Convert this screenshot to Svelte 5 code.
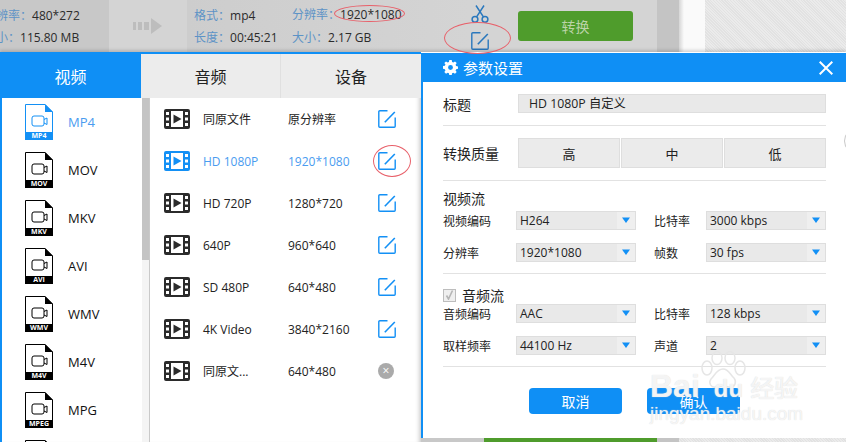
<script>
  const formats = [
    { name: 'MP4', badge: 'MP4', active: true },
    { name: 'MOV', badge: 'MOV' },
    { name: 'MKV', badge: 'MKV' },
    { name: 'AVI', badge: 'AVI' },
    { name: 'WMV', badge: 'WMV' },
    { name: 'M4V', badge: 'M4V' },
    { name: 'MPG', badge: 'MPEG' },
    { name: '', badge: '' },
  ];

  const presets = [
    { name: '同原文件', res: '原分辨率' },
    { name: 'HD 1080P', res: '1920*1080', active: true },
    { name: 'HD 720P', res: '1280*720' },
    { name: '640P', res: '960*640' },
    { name: 'SD 480P', res: '640*480' },
    { name: '4K Video', res: '3840*2160' },
    { name: '同原文...', res: '640*480', removable: true },
  ];
</script>

{#snippet editIcon(cls)}
  <svg class={cls} width="18" height="18" viewBox="0 0 18 18" fill="none" stroke="currentColor" stroke-width="1.4">
    <path d="M9.500 .8H1.800a1 1 0 0 0-1 1v14.400a1 1 0 0 0 1 1h14.400a1 1 0 0 0 1-1V7.500"/>
    <path d="M6.800 12.300 16.800 2" stroke-width="1.600"/>
  </svg>
{/snippet}

{#snippet caret()}
  <svg width="10" height="7" viewBox="0 0 10 7"><path d="M1 .5h8L5 6z" fill="#1390f5"/></svg>
{/snippet}

{#snippet select(value)}
  <div class="select">
    <span class="select-value">{value}</span>
    <span class="select-btn">{@render caret()}</span>
  </div>
{/snippet}

<div class="page">
  <!-- Task row, dimmed behind the panels -->
  <header class="task">
    <div class="src">
      <div class="src-col">
        <p><span class="lbl">分辨率：</span>480*272</p>
        <p><span class="lbl">大小：</span>115.80 MB</p>
      </div>
    </div>
    <div class="arrow">
      <svg width="30" height="16" viewBox="0 0 30 16" fill="#bdbdbd">
        <rect x="0" y="4" width="3" height="8"/>
        <rect x="5" y="4" width="4" height="8"/>
        <rect x="11" y="4" width="5" height="8"/>
        <path d="M18 4V0l11 8-11 8v-4z"/>
      </svg>
    </div>
    <div class="dst">
      <div class="dst-col">
        <p><span class="lbl">格式：</span>mp4</p>
        <p><span class="lbl">长度：</span>00:45:21</p>
      </div>
      <div class="dst-col second">
        <p><span class="lbl">分辨率：</span>1920*1080</p>
        <p><span class="lbl">大小：</span>2.17 GB</p>
      </div>
      <div class="tools">
        <svg width="18" height="18" viewBox="0 0 18 18" fill="none" stroke="#2a78bd" stroke-width="1.500">
          <circle cx="4" cy="14.300" r="2.900"/>
          <circle cx="14" cy="14.300" r="2.900"/>
          <path d="M5.600 11.800 13 .5M12.400 11.800 5 .5"/>
        </svg>
        {@render editIcon('tool-edit')}
      </div>
      <button class="convert">转换</button>
    </div>
    <div class="scroll-dim"></div>
    <div class="gap"></div>
    <div class="texture"></div>
  </header>

  <div class="body">
    <!-- Format picker -->
    <section class="picker">
      <div class="tabs">
        <div class="tab on">视频</div>
        <div class="tab">音频</div>
        <div class="tab">设备</div>
      </div>
      <div class="picker-main">
        <ul class="formats">
          {#each formats as f}
            <li class="format" class:active={f.active}>
              <svg class="doc" width="28" height="36" viewBox="0 0 28 36" fill="none">
                <path class="doc-line" d="M.5 29V.5H20L27.500 8V29"/>
                <path class="doc-fill" d="M20 0l8 8h-8z"/>
                <path class="doc-fill" d="M0 28h28v8H0z"/>
                <rect class="doc-line" x="7" y="12" width="12" height="10" rx="2"/>
                <path class="doc-line" d="M19 15.500l3-1.500v6.500l-3-1.500"/>
              </svg>
              <span class="badge">{f.badge}</span>
              <span class="format-name">{f.name}</span>
            </li>
          {/each}
        </ul>
        <div class="scroll"><div class="thumb"></div></div>
        <ul class="presets">
          {#each presets as p}
            <li class="preset" class:active={p.active}>
              <svg class="film" width="26" height="20" viewBox="0 0 26 20">
                <path fill-rule="evenodd" fill="currentColor" d="M2 0h22a2 2 0 0 1 2 2v16a2 2 0 0 1-2 2H2a2 2 0 0 1-2-2V2a2 2 0 0 1 2-2zM2 3v3h3V3zM2 8.500v3h3v-3zM2 14v3h3v-3zM21 3v3h3V3zM21 8.500v3h3v-3zM21 14v3h3v-3zM7 2v16h12V2z"/>
                <path fill="currentColor" d="M9.500 5.500v9l8-4.500z"/>
              </svg>
              <span class="preset-name">{p.name}</span>
              <span class="preset-res">{p.res}</span>
              {#if p.removable}
                <span class="remove">×</span>
              {:else}
                {@render editIcon('preset-edit')}
              {/if}
            </li>
          {/each}
        </ul>
      </div>
    </section>

    <!-- Settings dialog -->
    <div class="dialog-col">
      <section class="dialog">
        <div class="dlg-head">
          <svg width="15" height="15" viewBox="0 0 16 16" fill="#fff">
            <path fill-rule="evenodd" d="M6.700 0h2.600l.4 2.100 1.300.6L12.800 1.500l1.800 1.800-1.200 1.800.6 1.300 2 .4v2.600l-2 .4-.6 1.300 1.200 1.800-1.800 1.800-1.800-1.200-1.300.6-.4 2H6.700l-.4-2-1.300-.6-1.800 1.200-1.800-1.800 1.200-1.800-.6-1.300-2-.4V6.400l2-.4.6-1.300L1.400 3.300l1.800-1.800L5 2.700l1.300-.6zM8 5.400a2.600 2.600 0 1 0 0 5.200 2.600 2.600 0 0 0 0-5.200z"/>
          </svg>
          <span class="dlg-title">参数设置</span>
          <svg class="close" width="14" height="14" viewBox="0 0 14 14" stroke="#fff" stroke-width="2"><path d="M.7.700l12.600 12.600M13.300.700.700 13.300"/></svg>
        </div>
        <div class="dlg-body">
          <div class="row title-row">
            <span class="row-lbl">标题</span>
            <div class="title-input">HD 1080P 自定义</div>
          </div>
          <div class="row quality-row">
            <span class="row-lbl">转换质量</span>
            <div class="quality">
              <div>高</div>
              <div>中</div>
              <div>低</div>
            </div>
          </div>
          <div class="stream">
            <div class="stream-head">视频流</div>
            <div class="grid">
              <span>视频编码</span>{@render select('H264')}
              <span class="right">比特率</span>{@render select('3000 kbps')}
              <span>分辨率</span>{@render select('1920*1080')}
              <span class="right">帧数</span>{@render select('30 fps')}
            </div>
          </div>
          <div class="stream audio">
            <div class="stream-head">
              <span class="check">
                <svg width="9" height="10" viewBox="0 0 9 10" fill="none" stroke="#b5b5b5" stroke-width="1.600"><path d="M1.500 5.500 3.500 9 7.500 .5"/></svg>
              </span>
              音频流
            </div>
            <div class="grid">
              <span>音频编码</span>{@render select('AAC')}
              <span class="right">比特率</span>{@render select('128 kbps')}
              <span>取样频率</span>{@render select('44100 Hz')}
              <span class="right">声道</span>{@render select('2')}
            </div>
          </div>
          <div class="actions">
            <button>取消</button>
            <button>确认</button>
          </div>
        </div>
        <i class="edge-arc"></i>
      </section>
      <div class="under">
        <div class="under-a"></div>
        <div class="under-b"></div>
        <div class="under-c"></div>
        <div class="under-d"></div>
      </div>
    </div>
  </div>

  <!-- Hand-drawn red annotations -->
  <i class="ring ring-res"></i>
  <i class="ring ring-tool"></i>
  <i class="ring ring-list"></i>

  <!-- Watermark -->
  <div class="mark">
    <svg class="paw" width="46" height="42" viewBox="0 0 46 42" fill="none" stroke="#e6e6e6" stroke-width="1.500">
      <ellipse cx="7" cy="17" rx="5" ry="7"/>
      <ellipse cx="17" cy="7" rx="5" ry="6.500"/>
      <ellipse cx="30" cy="7" rx="5" ry="6.500"/>
      <ellipse cx="40" cy="17" rx="5" ry="7"/>
      <path d="M23 18c-6 0-8 6-12 10-3 4 0 9 5 8 4-1 9-1 13 0 6 1 8-5 5-9-4-3-5-9-11-9z"/>
    </svg>
    <div class="mark-top"><span>Bai</span><span class="du">du</span><span class="jy">经验</span></div>
    <div class="mark-url">jingyan.baidu.com</div>
  </div>
</div>

<style>
  :global(body) {
    margin: 0;
  }
  .page {
    position: relative;
    width: 846px;
    height: 442px;
    overflow: hidden;
    display: flex;
    flex-direction: column;
    font-family: "Open Sans", "Noto Sans CJK SC", sans-serif;
    font-size: 12px;
    color: #222;
    background: #fff;
  }
  p, ul {
    margin: 0;
    padding: 0;
    list-style: none;
  }

  /* Task row */
  .task {
    height: 52px;
    flex: none;
    display: flex;
    color: #2b2b2b;
    font-size: 12px;
  }
  .task p {
    line-height: 22px;
    white-space: nowrap;
  }
  .lbl {
    color: #5d93c6;
  }
  .src {
    width: 109px;
    background: #c8c8c8;
    overflow: hidden;
  }
  .src-col {
    margin: 5px 0 0 -16px;
  }
  .arrow {
    width: 78px;
    background: #d4d4d4;
    display: flex;
    align-items: center;
    justify-content: center;
  }
  .dst {
    width: 470px;
    background: linear-gradient(90deg, #cdcdcd, #d4d4d4 60%);
    display: flex;
    padding-left: 7px;
    box-sizing: border-box;
  }
  .dst-col {
    width: 98px;
    margin-top: 5px;
    flex: none;
  }
  .dst-col.second {
    width: 160px;
  }
  .dst-col.second p:first-child {
    margin-top: -1px;
    margin-bottom: 1px;
  }
  .tools {
    width: 56px;
    flex: none;
    display: flex;
    flex-direction: column;
    align-items: center;
    padding-top: 5px;
    gap: 9px;
    color: #2a78bd;
  }
  .convert {
    width: 115px;
    height: 30px;
    flex: none;
    margin: 11px 0 0 10px;
    border: 0;
    border-radius: 3px;
    background: #4f9c2c;
    color: #bcd4a8;
    font: inherit;
    font-size: 14px;
    padding: 0;
  }
  .scroll-dim {
    width: 22px;
    background: #c4c4c4;
  }
  .gap {
    width: 26px;
    background: linear-gradient(90deg, #d6d6d6, #fafafa 5px);
  }
  .texture, .under-d {
    flex: 1;
    background: repeating-linear-gradient(45deg, #e2e2e2 0 1px, #ebebeb 1px 2px);
  }

  .body {
    position: relative;
    flex: 1;
    min-height: 0;
    display: flex;
    box-shadow: 0 -2px 3px rgba(0, 0, 0, .15);
  }

  /* Format picker */
  .picker {
    width: 421px;
    flex: none;
    box-sizing: border-box;
    border-left: 2px solid #0f8ff5;
    border-top: 2px solid #0f8ff5;
    display: flex;
    flex-direction: column;
    background: #fff;
    box-shadow: inset -5px 0 5px -4px #bbb;
  }
  .tabs {
    height: 44px;
    flex: none;
    display: grid;
    grid-template-columns: 141px 140px 1fr;
    margin-left: -2px;
  }
  .tab {
    display: flex;
    align-items: center;
    justify-content: center;
    font-size: 16px;
    color: #222;
    background: #ececec;
    border-right: 1px solid #e0e0e0;
  }
  .tab:last-child {
    border-right: 0;
  }
  .tab.on {
    background: #0f8ff5;
    color: #fff;
    border: 0;
  }
  .picker-main {
    flex: 1;
    min-height: 0;
    display: flex;
  }
  .formats {
    width: 140px;
    flex: none;
    overflow: hidden;
  }
  .format {
    position: relative;
    height: 48px;
    display: flex;
    align-items: center;
    padding-left: 23px;
    font-size: 13px;
    color: #111;
  }
  .doc {
    color: #000;
    flex: none;
  }
  .doc-line {
    stroke: currentColor;
  }
  .doc-fill {
    fill: currentColor;
  }
  .badge {
    position: absolute;
    left: 23px;
    width: 28px;
    top: 34px;
    text-align: center;
    color: #fff;
    font-size: 7px;
    line-height: 8px;
    font-weight: 700;
  }
  .format-name {
    margin-left: 15px;
  }
  .format.active {
    color: #4a9cf0;
  }
  .format.active .doc {
    color: #1390f5;
  }
  .scroll {
    width: 7px;
    flex: none;
    background: #f4f4f4;
    border-right: 1px solid #c9c9c9;
  }
  .thumb {
    height: 162px;
    background: #c4c4c4;
  }
  .presets {
    flex: 1;
  }
  .preset {
    height: 42px;
    display: flex;
    align-items: center;
    padding-left: 14px;
    color: #222;
  }
  .preset .film {
    color: #2b2b2b;
    flex: none;
  }
  .preset-name {
    width: 85px;
    margin-left: 13px;
    flex: none;
  }
  .preset-res {
    width: 90px;
    flex: none;
  }
  :global(.preset-edit) {
    color: #1390f5;
    flex: none;
  }
  .remove {
    width: 16px;
    height: 16px;
    border-radius: 50%;
    background: #aaa;
    color: #fff;
    font-size: 12px;
    line-height: 16px;
    text-align: center;
  }
  .preset.active {
    color: #4a9cf0;
  }
  .preset.active .film {
    color: #1390f5;
  }

  /* Dialog */
  .dialog-col {
    flex: 1;
    display: flex;
    flex-direction: column;
    min-width: 0;
  }
  .dialog {
    position: relative;
    overflow: hidden;
    flex: 1;
    min-height: 0;
    border-left: 2px solid #0f8ff5;
    background: #fff;
    display: flex;
    flex-direction: column;
    margin-top: 1px;
  }
  .dlg-head {
    height: 29px;
    flex: none;
    background: #0f8ff5;
    color: #fff;
    display: flex;
    align-items: center;
    padding: 0 13px 0 20px;
  }
  .dlg-title {
    margin-left: 5px;
    font-size: 15px;
  }
  .close {
    margin-left: auto;
  }
  .dlg-body {
    flex: 1;
    padding: 0 20px;
    font-size: 13px;
    color: #222;
    display: flex;
    flex-direction: column;
  }
  .row {
    display: flex;
    align-items: center;
    box-sizing: border-box;
    border-bottom: 1px solid #e2e2e2;
  }
  .row-lbl {
    width: 75px;
    flex: none;
    font-size: 14px;
  }
  .title-row {
    height: 44px;
  }
  .title-input {
    flex: 1;
    height: 19px;
    box-sizing: border-box;
    background: #e9e9e9;
    border: 1px solid #dedede;
    padding-left: 10px;
    line-height: 17px;
    font-size: 12.300px;
  }
  .quality-row {
    height: 55px;
  }
  .quality {
    flex: 1;
    display: grid;
    grid-template-columns: repeat(3, 1fr);
    gap: 1px;
  }
  .quality div {
    height: 30px;
    box-sizing: border-box;
    background: #ebebeb;
    border: 1px solid #dedede;
    display: flex;
    align-items: center;
    justify-content: center;
    font-size: 13px;
  }
  .stream {
    border-bottom: 1px solid #e2e2e2;
  }
  .stream-head {
    display: flex;
    align-items: center;
    gap: 6px;
    height: 30px;
    font-size: 14px;
    padding-top: 4px;
    box-sizing: border-box;
  }
  .grid {
    display: grid;
    grid-template-columns: 73px 120px 70px 120px;
    grid-auto-rows: 19px;
    row-gap: 13px;
    align-items: center;
    font-size: 12px;
    padding-bottom: 11px;
  }
  .grid span {
    white-space: nowrap;
  }
  .right {
    padding-left: 18px;
  }
  .audio .stream-head {
    padding-top: 12px;
  }
  .check {
    width: 13px;
    height: 13px;
    box-sizing: border-box;
    border: 1px solid #bdbdbd;
    background: #efefef;
    display: flex;
    align-items: center;
    justify-content: center;
  }
  .select {
    display: flex;
    height: 19px;
    box-sizing: border-box;
    background: #e9e9e9;
    border: 1px solid #dedede;
  }
  .select-value {
    flex: 1;
    padding-left: 3px;
    line-height: 17px;
    font-size: 12px;
  }
  .select-btn {
    width: 18px;
    background: #efefef;
    display: flex;
    align-items: center;
    justify-content: center;
  }
  .actions {
    display: flex;
    justify-content: center;
    gap: 25px;
    padding-top: 21px;
  }
  .actions button {
    width: 93px;
    height: 26px;
    border: 0;
    border-radius: 4px;
    background: #0f8ff5;
    color: #fff;
    font: inherit;
    font-size: 14px;
    padding: 0;
  }
  .edge-arc {
    position: absolute;
    left: 421px;
    top: 74px;
    width: 28px;
    height: 28px;
    box-sizing: border-box;
    border: 1px solid #c8c8c8;
    border-radius: 50%;
  }
  .under {
    height: 4px;
    flex: none;
    display: flex;
  }
  .under-a {
    width: 63px;
    background: #c8c8c8;
  }
  .under-b {
    width: 173px;
    background: #4f9c2c;
  }
  .under-c {
    width: 22px;
    background: #c4c4c4;
  }
  .under-d {
    width: 26px;
  }

  /* Annotations */
  .ring {
    position: absolute;
    box-sizing: border-box;
    border: 1px solid #e8606a;
    border-radius: 50%;
  }
  .ring-res {
    left: 334px;
    top: 5px;
    width: 71px;
    height: 17px;
  }
  .ring-tool {
    left: 444px;
    top: 22px;
    width: 67px;
    height: 32px;
  }
  .ring-list {
    left: 373px;
    top: 145px;
    width: 38px;
    height: 32px;
  }

  /* Watermark */
  .mark {
    position: absolute;
    left: 650px;
    top: 351px;
    width: 155px;
    height: 75px;
    color: rgba(255, 255, 255, .75);
    pointer-events: none;
  }
  .paw {
    position: absolute;
    left: 50px;
    top: 0;
  }
  .mark-top {
    position: absolute;
    top: 17px;
    left: 0;
    white-space: nowrap;
    font-family: "Liberation Sans", sans-serif;
    font-size: 32px;
    line-height: 36px;
    font-weight: 700;
    text-shadow: 0 0 1px #d4d4d4;
  }
  .du {
    margin-left: 14px;
    font-size: 24px;
  }
  .jy {
    margin-left: 7px;
    font-family: "Noto Sans CJK SC", sans-serif;
    font-size: 24px;
    font-weight: 500;
  }
  .mark-url {
    position: absolute;
    top: 52px;
    left: 0;
    white-space: nowrap;
    font-family: "Liberation Sans", sans-serif;
    font-size: 19px;
    line-height: 22px;
    text-shadow: 0 0 1px #d4d4d4;
  }
</style>
